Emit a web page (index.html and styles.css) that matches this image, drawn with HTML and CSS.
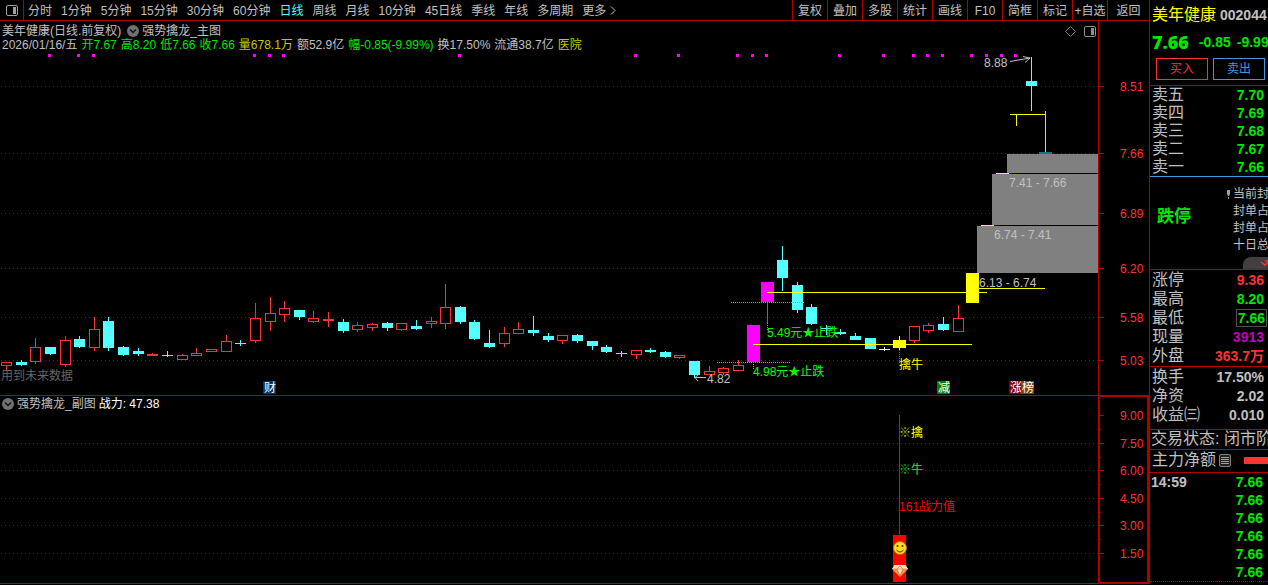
FILE: index.html
```html
<!DOCTYPE html>
<html lang="zh-CN">
<head>
<meta charset="utf-8">
<title>美年健康 002044</title>
<link rel="stylesheet" href="styles.css">
</head>
<body>
<div class="app">
  <main class="main">
    <nav class="toolbar">
      <button class="layout-btn" aria-label="布局">
        <svg width="12" height="11" viewBox="0 0 12 11"><rect x=".5" y=".5" width="11" height="10" rx="1.5" fill="none" stroke="#a0a0a0"/><rect x="7" y="2" width="3" height="7" fill="#a0a0a0"/></svg>
      </button>
      <div class="periods">
        <button>分时</button><button>1分钟</button><button>5分钟</button><button>15分钟</button><button>30分钟</button><button>60分钟</button><button class="active">日线</button><button>周线</button><button>月线</button><button>10分钟</button><button>45日线</button><button>季线</button><button>年线</button><button>多周期</button><button class="more">更多<svg width="6" height="9" viewBox="0 0 6 9"><path d="M1 0.5L5 4.5L1 8.5" fill="none" stroke="#c0c0c0"/></svg></button>
      </div>
      <div class="tools">
        <button>复权</button><button>叠加</button><button>多股</button><button>统计</button><button>画线</button><button>F10</button><button>简框</button><button>标记</button><button>+自选</button><button class="back">返回</button>
      </div>
    </nav>

    <section class="panel">
      <div class="plot">
        <header class="head">
          <div class="line">
            <span>美年健康(日线.前复权)</span>
            <button class="drop" aria-label="指标"><svg width="12" height="12" viewBox="0 0 12 12"><circle cx="6" cy="6" r="6" fill="#707070"/><path d="M3 4.5L6 7.5L9 4.5" fill="none" stroke="#111" stroke-width="1.5"/></svg></button>
            <span>强势擒龙_主图</span>
            <span class="corner">
              <svg width="11" height="11" viewBox="0 0 11 11"><path d="M5.5 .5L10.5 5.5L5.5 10.5L.5 5.5Z" fill="none" stroke="#808080"/></svg>
              <svg width="12" height="11" viewBox="0 0 12 11"><rect x=".5" y=".5" width="11" height="10" rx="1.5" fill="none" stroke="#909090"/><rect x="7" y="2" width="3" height="7" fill="#909090"/></svg>
            </span>
          </div>
          <div class="line quote">
            <span>2026/01/16/五</span><span class="down">开7.67</span><span class="down">高8.20</span><span class="down">低7.66</span><span class="down">收7.66</span><span class="gold">量678.1万</span><span>额52.9亿</span><span class="down">幅-0.85(-9.99%)</span><span>换17.50%</span><span>流通38.7亿</span><span class="gold">医院</span>
          </div>
        </header>
        <svg class="chart" id="kline" viewBox="0 52 1098 343"></svg>
      </div>
      <div class="axis"><svg class="chart" id="axis-main" viewBox="1099 21 50 374"></svg></div>
    </section>

    <section class="panel sub">
      <div class="plot">
        <header class="head sub-head">
          <button class="drop" aria-label="指标"><svg width="12" height="12" viewBox="0 0 12 12"><circle cx="6" cy="6" r="6" fill="#707070"/><path d="M3 4.5L6 7.5L9 4.5" fill="none" stroke="#111" stroke-width="1.5"/></svg></button>
          <span>强势擒龙_副图</span><span class="white">战力: 47.38</span>
        </header>
        <svg class="chart" id="power" viewBox="0 412 1098 171"></svg>
      </div>
      <div class="axis"><svg class="chart" id="axis-sub" viewBox="1100 397 47 185"></svg></div>
    </section>
  </main>

  <aside class="side">
    <div class="name"><span class="stock">美年健康</span><b>002044</b></div>
    <div class="price"><strong>7.66</strong><b>-0.85</b><b>-9.99%</b></div>
    <div class="trade"><button class="buy">买入</button><button class="sell">卖出</button></div>
    <dl class="asks">
      <div><dt>卖五</dt><dd>7.70</dd></div>
      <div><dt>卖四</dt><dd>7.69</dd></div>
      <div><dt>卖三</dt><dd>7.68</dd></div>
      <div><dt>卖二</dt><dd>7.67</dd></div>
      <div><dt>卖一</dt><dd>7.66</dd></div>
    </dl>
    <div class="limit">
      <strong>跌停</strong>
      <div class="notes"><span class="mark"><svg width="3" height="9" viewBox="0 0 3 9"><path d="M0 0H3V4L2 6H1L0 4ZM1 7H2V9H1Z" fill="#a0a0a0"/></svg>当前封单</span><span>封单占比</span><span>封单占流</span><span>十日总跌</span></div>
      <div class="tab"><svg width="10" height="8" viewBox="0 0 10 8"><path d="M1 3L5 6L9 3M5 2H8" fill="none" stroke="#ff3232" stroke-width="1.5"/></svg></div>
    </div>
    <dl class="stats">
      <div><dt>涨停</dt><dd class="up">9.36</dd></div>
      <div><dt>最高</dt><dd>8.20</dd></div>
      <div><dt>最低</dt><dd class="boxed">7.66</dd></div>
      <div><dt>现量</dt><dd class="violet">3913</dd></div>
      <div><dt>外盘</dt><dd class="up">363.7万</dd></div>
    </dl>
    <dl class="stats ratios">
      <div><dt>换手</dt><dd class="plain">17.50%</dd></div>
      <div><dt>净资</dt><dd class="plain">2.02</dd></div>
      <div><dt>收益㈢</dt><dd class="plain">0.010</dd></div>
    </dl>
    <div class="status">交易状态: 闭市阶段</div>
    <div class="flow"><span>主力净额</span><svg width="12" height="13" viewBox="0 0 12 13"><rect x=".5" y=".5" width="11" height="12" rx="1.5" fill="#222" stroke="#808080"/><path d="M2 3.5H10M2 5.5H10M2 7.5H10M2 9.5H10" stroke="#a0a0a0"/></svg><i></i></div>
    <table class="ticks">
      <tr><th>14:59</th><td>7.66</td></tr>
      <tr><th></th><td>7.66</td></tr>
      <tr><th></th><td>7.66</td></tr>
      <tr><th></th><td>7.66</td></tr>
      <tr><th></th><td>7.66</td></tr>
      <tr><th></th><td>7.66</td></tr>
    </table>
  </aside>
</div>
<script src="chart.js"></script>
</body>
</html>
```
FILE: styles.css
```css
* { box-sizing: border-box; }
body {
  margin: 0;
  background: #000;
  color: #c0c0c0;
  font: 12px/14px "Liberation Sans", "Noto Sans CJK SC", sans-serif;
}
button {
  margin: 0;
  padding: 0;
  border: 0;
  background: none;
  color: inherit;
  font: inherit;
  white-space: nowrap;
}
svg { display: block; }
dl, dd { margin: 0; }

.app { display: flex; align-items: stretch; overflow: hidden; }
.main { flex: 1; min-width: 0; }

.toolbar { display: flex; height: 21px; border-bottom: 1px solid #b00000; }
.toolbar button { padding-top: 1px; }
.layout-btn { width: 24px; display: flex; align-items: center; justify-content: center; border-right: 1px solid #b00000; }
.periods { display: flex; gap: 9px; padding-left: 4px; flex: 1; }
.periods .active { color: #54ffff; }
.more { display: flex; align-items: center; gap: 4px; }
.tools { display: flex; }
.tools button { width: 35px; border-left: 1px solid #b00000; }
.tools .back { width: 42px; }

.panel { display: flex; }
.plot { flex: 1; min-width: 0; }
.chart { width: 100%; height: auto; }
.axis { flex: none; width: 51px; border-left: 1px solid #b00000; }
.sub { border-top: 1px solid #b00000; border-bottom: 1px solid #b00000; }
.sub .axis { border: solid #b00000; border-width: 1px 2px; }

.head { height: 31px; padding: 3px 2px 0; white-space: nowrap; }
.line { display: flex; align-items: center; gap: 3px; height: 14px; }
.quote { gap: 4px; }
.drop { flex: none; }
.line .drop { margin-left: 3px; }
.corner { display: flex; gap: 8px; margin-left: auto; }
.sub-head { display: flex; align-items: center; gap: 3px; height: 16px; padding-top: 0; }
.down { color: #00e600; }
.gold { color: #c8c800; }
.white { color: #fff; }

.chart text { font-size: 12px; }
.chart line, .chart rect { shape-rendering: crispEdges; }

.side { flex: none; width: 119px; overflow: hidden; border-left: 1px solid #b00000; white-space: nowrap; font-size: 16px; line-height: 18px; }
.side b, .side dd, .side th, .side td { font-size: 14px; font-weight: bold; }
.name { display: flex; align-items: center; gap: 4px; height: 30px; padding-left: 2px; }
.stock { color: #ffff00; }
.price { display: flex; align-items: center; gap: 8px; height: 24px; padding-left: 2px; color: #00e600; }
.price strong { font: 800 18px/24px "Open Sans", sans-serif; margin-right: 2px; }
.price b { margin-right: -2px; }
.trade { display: flex; gap: 5px; padding: 4px 3px 5px 6px; border-bottom: 1px solid #b00000; }
.trade button { flex: 1; height: 22px; border: 1px solid; font-size: 12px; }
.buy { color: #ff3232; }
.sell { color: #4296e0; }
.side dl > div { display: flex; align-items: center; justify-content: space-between; padding: 0 4px 0 2px; }
.side dd { color: #00e600; }
.asks { border-bottom: 1px solid #4296e0; }
.asks > div { height: 18px; }
.limit { display: grid; grid-template-columns: 76px 1fr; align-items: center; height: 93px; padding: 8px 0 0 7px; border-bottom: 1px solid #b00000; }
.limit strong { margin-bottom: 6px; color: #00e600; font-size: 17px; }
.notes { display: grid; grid-auto-rows: 17px; font-size: 12px; line-height: 17px; }
.mark { display: flex; align-items: center; gap: 3px; margin-left: -6px; }
.tab { grid-column: 2; justify-self: stretch; align-self: end; height: 12px; margin-left: 10px; padding: 2px 0 0 17px; border-radius: 8px 0 0 0; background: #404040; }
.stats { padding-bottom: 1px; border-bottom: 1px solid #b00000; }
.stats > div { height: 19px; }
.side .up { color: #ff3232; }
.side .violet { color: #c000c0; }
.side .plain { color: #c0c0c0; }
.boxed { margin-right: -3px; padding: 0 2px; outline: 1px solid #505050; outline-offset: -1px; }
.ratios { padding-bottom: 5px; }
.status { height: 20px; padding-left: 1px; border-bottom: 1px solid #b00000; }
.flow { display: flex; align-items: center; height: 23px; gap: 3px; padding: 0 0 2px 2px; border-bottom: 1px solid #b00000; }
.flow i { flex: 1; height: 7px; margin-left: 10px; background: #ff3232; }
.ticks { width: 100%; border-collapse: collapse; border-bottom: 1px dotted #b00000; }
.ticks th, .ticks td { height: 18px; padding: 0 5px 0 1px; line-height: 18px; text-align: left; }
.ticks td { color: #00e600; text-align: right; }
```
FILE: chart.js
```js
const NS = 'http://www.w3.org/2000/svg';
const RED = '#ff3232', CYAN = '#54ffff', LINE = '#b00000', YEL = '#ffff00', MAG = '#ff00ff', GREEN = '#00ff00';

function add(parent, tag, attrs, text) {
  const el = document.createElementNS(NS, tag);
  for (const k in attrs) el.setAttribute(k, attrs[k]);
  if (text) el.textContent = text;
  parent.appendChild(el);
  return el;
}
const box = (p, x, y, w, h, fill) => add(p, 'rect', { x, y, width: w, height: h, fill });
const label = (p, x, mid, fill, text) => add(p, 'text', { x, y: mid + 4, fill }, text);
const dots = (p, x1, y1, x2, y2, color, dash) =>
  add(p, 'line', { x1, y1, x2, y2, stroke: color, 'stroke-dasharray': dash });

const k = document.getElementById('kline');
for (const y of [86, 153, 213, 268, 317, 360]) dots(k, 1, y + .5, 1098, y + .5, '#a00000', '1 3');
for (const x of [49, 78, 93, 254, 269, 283, 459, 635, 678, 737, 752, 766, 839, 883, 913, 927, 942, 971, 986, 1001, 1015])
  box(k, x - 1, 54, 3, 3, MAG);

label(k, 1, 376, '#666', '用到未来数据');

// kind, left, body top, body bottom, wick top, wick bottom
const candles = [
  ['r',1,362,366,362,370],['c',16,362,365,360,366],['r',30,347,362,338,364],['c',45,347,354,347,355],
  ['r',60,340,365,336,367],['c',74,339,347,336,348],['r',89,329,348,317,351],['c',103,321,348,317,351],
  ['c',118,347,355,346,356],['c',133,351,354,348,356],['r',147,354,356,353,356],['c',162,355,356,351,357],
  ['r',177,355,360,354,360],['r',191,353,356,348,356],['r',206,349,352,349,352],['r',221,341,352,335,352],
  ['c',235,343,344,340,346],['r',250,318,341,318,343],['r',265,313,322,297,331],['r',279,308,315,301,322],
  ['c',294,310,317,310,320],['r',308,318,322,311,323],['r',323,319,321,312,327],['c',338,322,331,319,333],
  ['r',352,325,330,322,332],['r',367,324,328,323,331],['c',382,323,328,322,331],['r',396,323,330,323,331],
  ['c',411,326,329,320,330],['r',426,321,324,317,328],['r',440,307,324,284,329],['c',455,307,322,306,324],
  ['c',469,322,339,320,340],['c',484,343,347,330,348],['r',499,333,344,327,347],['r',513,329,334,322,334],
  ['c',528,330,333,316,336],['c',543,336,340,333,342],['r',557,335,341,335,344],['c',572,335,341,334,343],
  ['c',587,341,346,341,350],['c',601,347,352,345,353],['c',616,353,354,351,357],['r',631,350,355,350,359],
  ['c',645,350,352,348,353],['c',660,352,357,351,358],['r',674,355,358,355,359],['c',689,361,375,361,378],
  ['r',704,371,375,366,375],['r',718,368,373,367,375],['r',733,365,371,360,371],
  ['c',777,260,278,246,291],['c',792,285,310,282,313],['c',806,307,324,304,325],['c',821,328,329,325,335],
  ['c',835,332,334,329,335],['c',850,336,340,333,340],['c',865,338,349,338,349],['w',879,349,350,347,351],
  ['r',909,326,341,326,343],['r',923,325,331,323,333],['c',938,324,330,317,331],['r',953,318,332,305,332],
  ['c',1026,81,86,57,111]
];
for (const [kind, x, t, b, wt, wb] of candles) {
  const color = { r: RED, c: CYAN, w: '#fff' }[kind];
  box(k, x + 5, wt, 1, wb - wt, color);
  if (kind === 'r' && b - t > 2) {
    add(k, 'rect', { x: x + .5, y: t + .5, width: 10, height: b - t - 1, fill: '#000', stroke: RED });
  } else box(k, x, t, 11, b - t, color);
}
box(k, 255, 303, 1, 15, MAG);
box(k, 747, 325, 13, 37, MAG);
box(k, 761, 282, 13, 20, MAG);
box(k, 767, 302, 1, 21, RED);
box(k, 893, 340, 13, 8, YEL);
box(k, 899, 336, 1, 14, YEL);
box(k, 966, 273, 13, 30, YEL);

// forecast zones
box(k, 1007, 154, 91, 19, '#808080');
box(k, 992, 174, 106, 51, '#808080');
box(k, 977, 226, 121, 47, '#808080');
box(k, 996, 173, 13, 1, YEL);
box(k, 981, 225, 13, 1, YEL);
box(k, 1039, 152, 13, 2, '#008080');
box(k, 1045, 111, 1, 41, CYAN);

// signal lines
box(k, 767, 292, 220, 1, YEL);
box(k, 753, 344, 219, 1, YEL);
box(k, 979, 288, 66, 1, YEL);
box(k, 1010, 114, 35, 1, YEL);
box(k, 1016, 114, 1, 12, YEL);
dots(k, 731, 302.5, 804, 302.5, GREEN, '1 1');
dots(k, 717, 362.5, 790, 362.5, GREEN, '1 1');
dots(k, 767.5, 323, 767.5, 331, GREEN, '1 1');
dots(k, 753.5, 362, 753.5, 370, GREEN, '1 1');
dots(k, 899.5, 350, 899.5, 363, MAG, '1 1');

label(k, 767, 333, GREEN, '5.49元★止跌');
label(k, 753, 372, GREEN, '4.98元★止跌');
label(k, 899, 365, YEL, '擒牛');
label(k, 979, 283, '#c0c0c0', '6.13 - 6.74');
label(k, 1009, 183, '#c0c0c0', '7.41 - 7.66');
label(k, 994, 235, '#c0c0c0', '6.74 - 7.41');
label(k, 984, 63, '#c0c0c0', '8.88');
label(k, 707, 379, '#c0c0c0', '4.82');
add(k, 'path', { d: 'M1010 61.5L1030 58M1023 56.5L1030 58L1025 62.5', fill: 'none', stroke: '#c0c0c0' });
add(k, 'path', { d: 'M706 377.5H695M699 374L695 377.5L698 381', fill: 'none', stroke: '#c0c0c0' });

for (const [x, color, ch] of [[263, '#003366', '财'], [937, '#008000', '减'], [1009, '#800000', '涨'], [1021, '#804000', '榜']]) {
  box(k, x, 381, 13, 13, color);
  label(k, x + 1, 388, '#fff', ch);
}

const s = document.getElementById('power');
for (const y of [443, 470, 498, 525, 553]) dots(s, 1, y + .5, 1098, y + .5, '#a00000', '1 3');
box(s, 899, 415, 1, 120, '#f00');
box(s, 893, 535, 13, 47, '#f00');
label(s, 899, 433, '#c8c800', '※');
label(s, 911, 433, YEL, '擒');
label(s, 899, 470, '#00c800', '※');
label(s, 911, 470, GREEN, '牛');
label(s, 899, 507, '#f00', '161战力值');
add(s, 'circle', { cx: 900, cy: 548, r: 6.5, fill: '#ffdc1e', stroke: '#a07800' });
add(s, 'circle', { cx: 897.5, cy: 546, r: 1, fill: '#403000' });
add(s, 'circle', { cx: 902.5, cy: 546, r: 1, fill: '#403000' });
add(s, 'path', { d: 'M896.5 550Q900 554 903.5 550', fill: 'none', stroke: '#403000' });
add(s, 'path', { d: 'M894.5 565H905.5L908 569L900 577L892 569Z', fill: '#f09a50' });
add(s, 'path', { d: 'M894.5 565H905.5L908 569H892ZM897 569L900 575L903 569Z', fill: '#ffe0b8' });
add(s, 'path', { d: 'M893 569H907M897 569L900 576L903 569L900 566Z', fill: 'none', stroke: '#c86020', 'stroke-width': .5 });

const am = document.getElementById('axis-main');
for (const [y, t] of [[86, '8.51'], [153, '7.66'], [213, '6.89'], [268, '6.20'], [317, '5.58'], [360, '5.03']]) {
  box(am, 1099, y, 5, 1, LINE);
  label(am, 1120, y + 1, RED, t);
}
const as = document.getElementById('axis-sub');
for (const [y, t] of [[415, '9.00'], [443, '7.50'], [470, '6.00'], [498, '4.50'], [525, '3.00'], [553, '1.50']]) {
  box(as, 1100, y, 4, 1, LINE);
  if (y < 553) box(as, 1100, y + 14, 1, 1, LINE);
  label(as, 1120, y + 1, RED, t);
}
```
